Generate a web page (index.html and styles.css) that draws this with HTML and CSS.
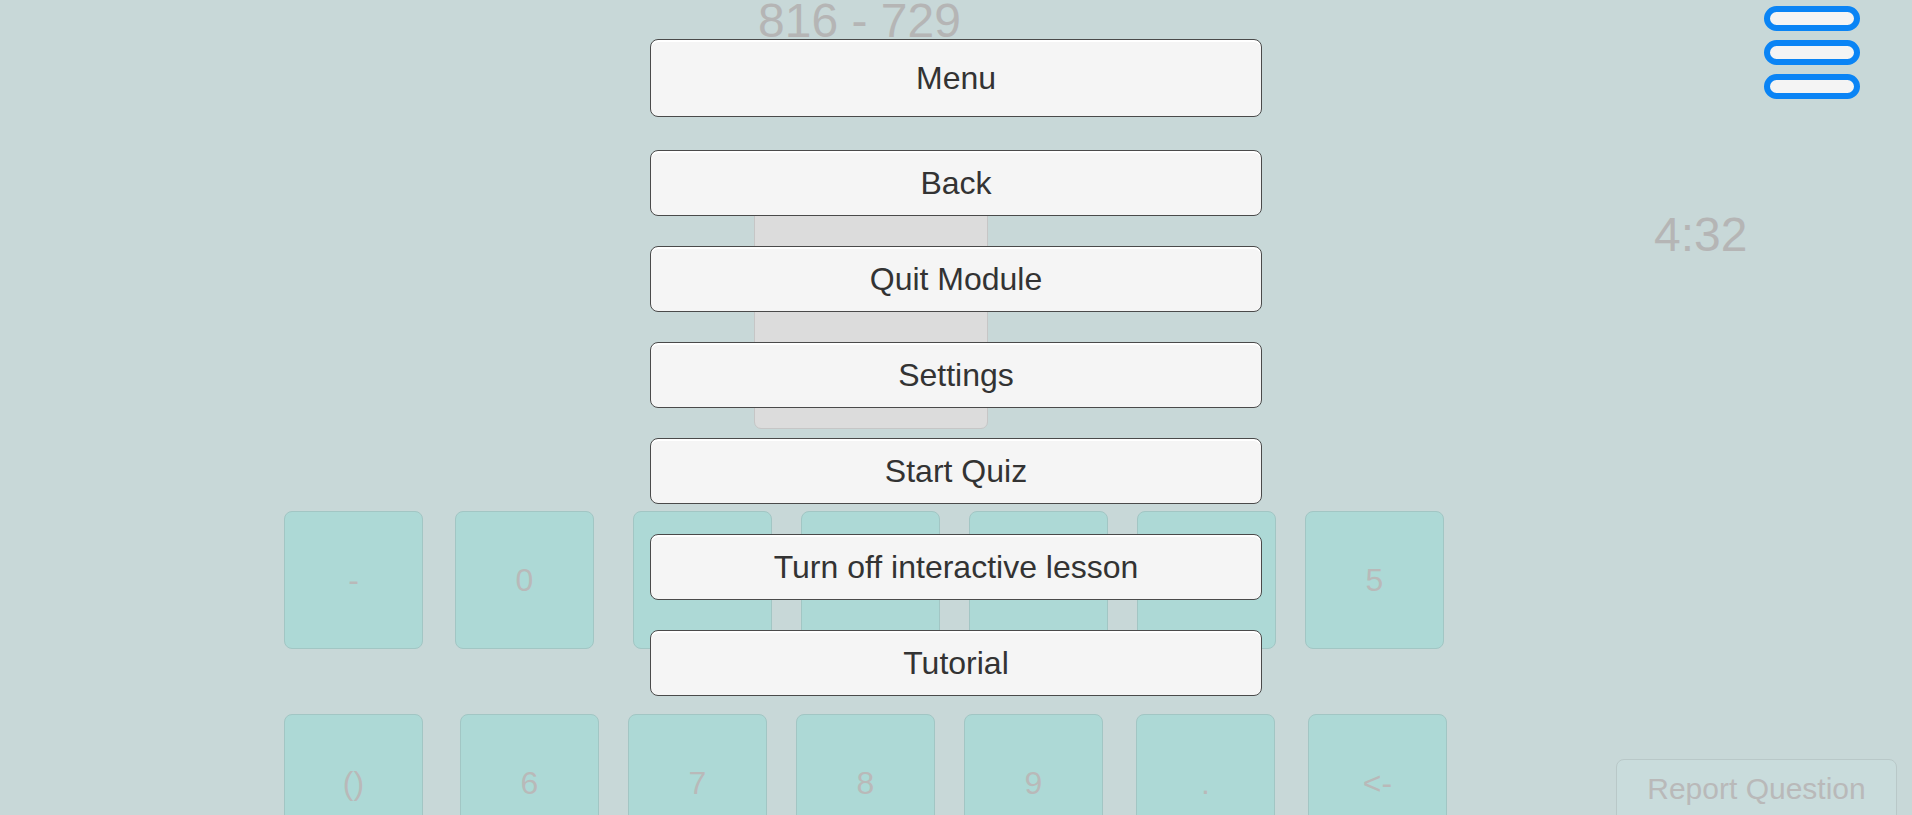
FILE: index.html
```html
<!DOCTYPE html>
<html lang="en">
<head>
<meta charset="utf-8">
<title>Quiz Menu</title>
<link rel="stylesheet" href="styles.css">
</head>
<body>
<div class="game">
  <header class="header">
    <div class="question">816 - 729</div>
    <div class="menu-icon" aria-label="Menu">
      <span class="bar"></span>
      <span class="bar"></span>
      <span class="bar"></span>
    </div>
  </header>
  <section class="middle">
    <div class="answer-panel"></div>
    <div class="timer">4:32</div>
  </section>
  <section class="keys row-a">
    <div class="key">-</div>
    <div class="key">0</div>
    <div class="key"></div>
    <div class="key"></div>
    <div class="key"></div>
    <div class="key"></div>
    <div class="key">5</div>
  </section>
  <section class="keys row-b">
    <div class="key">()</div>
    <div class="key">6</div>
    <div class="key">7</div>
    <div class="key">8</div>
    <div class="key">9</div>
    <div class="key">.</div>
    <div class="key">&lt;-</div>
    <div class="report">Report Question</div>
  </section>
</div>

<div class="modal">
  <div class="btn btn-title">Menu</div>
  <div class="btn-list">
    <div class="btn">Back</div>
    <div class="btn">Quit Module</div>
    <div class="btn">Settings</div>
    <div class="btn">Start Quiz</div>
    <div class="btn">Turn off interactive lesson</div>
    <div class="btn">Tutorial</div>
  </div>
</div>
</body>
</html>
```

FILE: styles.css
```css
html, body {
  margin: 0;
  padding: 0;
}

body {
  width: 1912px;
  height: 815px;
  overflow: hidden;
  background: #c8d8d8;
  font-family: "Liberation Sans", Arial, sans-serif;
  position: relative;
}

.game {
  display: flex;
  flex-direction: column;
  height: 815px;
}

.game > * {
  flex: none;
}

/* header */
.header {
  display: flex;
  height: 190px;
  align-items: flex-start;
}

.question {
  margin-left: 758px;
  margin-top: -3px;
  font-size: 48px;
  line-height: 48px;
  color: #b5b5b5;
}

.menu-icon {
  margin-left: auto;
  margin-right: 52px;
  margin-top: 6px;
  display: flex;
  flex-direction: column;
  gap: 9px;
}

.bar {
  display: block;
  width: 96px;
  height: 25px;
  box-sizing: border-box;
  border: 6px solid #0a84f5;
  border-radius: 13px;
  background: #f4f4f4;
}

/* middle */
.middle {
  display: flex;
  height: 321px;
  align-items: flex-start;
}

.answer-panel {
  margin-left: 754px;
  width: 234px;
  height: 239px;
  box-sizing: border-box;
  background: #dcdcdc;
  border: 1px solid #c6c6c6;
  border-radius: 7px;
}

.timer {
  margin-left: 666px;
  margin-top: 21px;
  font-size: 48px;
  line-height: 48px;
  color: #b5b5b5;
}

/* keypad */
.keys {
  display: flex;
  align-items: flex-start;
  padding-left: 284px;
}

.row-a {
  height: 138px;
  gap: 29px;
}

.row-a .key:nth-child(2) { margin-left: 3px; }
.row-a .key:nth-child(3) { margin-left: 10px; }

.row-b {
  margin-top: 65px;
  gap: 29px;
}

.row-b .key:nth-child(2) { margin-left: 8px; }
.row-b .key:nth-child(6) { margin-left: 4px; }
.row-b .key:nth-child(7) { margin-left: 4px; }

.key {
  width: 139px;
  height: 138px;
  flex: none;
  box-sizing: border-box;
  background: #add9d6;
  border: 1px solid #a2c6c4;
  border-radius: 8px;
  display: flex;
  align-items: center;
  justify-content: center;
  font-size: 32px;
  color: #b9b9b9;
}

.report {
  margin-left: auto;
  margin-right: 15px;
  margin-top: 45px;
  width: 281px;
  height: 80px;
  box-sizing: border-box;
  border: 1px solid #b9c8c8;
  border-radius: 8px;
  background: #c9dcdc;
  color: #b9b9b9;
  font-size: 30px;
  line-height: 30px;
  text-align: center;
  padding-top: 14px;
}

/* modal menu overlay */
.modal {
  position: absolute;
  top: 0;
  left: 0;
  right: 0;
  display: flex;
  flex-direction: column;
  align-items: center;
  padding-top: 39px;
}

.btn-list {
  display: flex;
  flex-direction: column;
  gap: 30px;
  margin-top: 33px;
}

.btn {
  width: 612px;
  height: 66px;
  box-sizing: border-box;
  background: #f5f5f5;
  border: 1.5px solid #4a4a4a;
  border-radius: 8px;
  box-shadow: inset 0 2px 0 #ffffff;
  display: flex;
  align-items: center;
  justify-content: center;
  font-size: 32px;
  color: #333333;
}

.btn-title {
  height: 78px;
}
```
